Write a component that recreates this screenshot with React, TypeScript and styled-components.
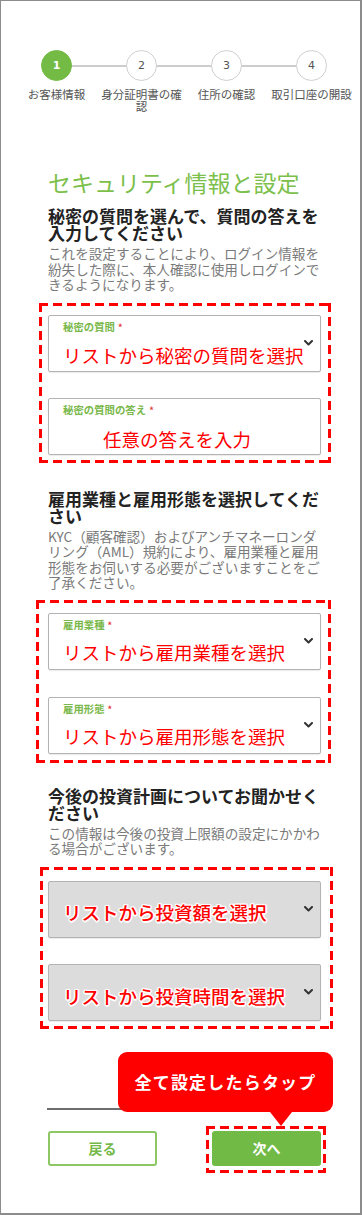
import React from "react";
import styled, { createGlobalStyle, css } from "styled-components";

const GlobalStyle = createGlobalStyle`
  html, body { margin: 0; padding: 0; background: #fff; }
  body { font-family: "Noto Sans CJK JP", "Noto Sans", sans-serif; }
`;

const GREEN = "#74bb46";
const RED = "#ff0000";

const dashedBorder = css`
  background-image: linear-gradient(to right, ${RED} 9px, transparent 9px),
    linear-gradient(to right, ${RED} 9px, transparent 9px),
    linear-gradient(to bottom, ${RED} 9px, transparent 9px),
    linear-gradient(to bottom, ${RED} 9px, transparent 9px);
  background-size: 14px 3px, 14px 3px, 3px 14px, 3px 14px;
  background-position: 0 0, 0 100%, 0 0, 100% 0;
  background-repeat: repeat-x, repeat-x, repeat-y, repeat-y;
`;

const Page = styled.div`
  width: 362px;
  height: 1215px;
  box-sizing: border-box;
  border: 1px solid #8c8c8c;
  border-right-width: 2px;
  border-bottom-width: 2px;
  background: #fff;
  overflow: hidden;
  padding-top: 49px;
`;

const Stepper = styled.div`
  display: grid;
  grid-template-columns: repeat(4, 85px);
  margin-left: 13px;
`;

const Step = styled.div<{ $first?: boolean }>`
  position: relative;
  display: flex;
  flex-direction: column;
  align-items: center;
  &::before {
    content: "";
    display: ${(p) => (p.$first ? "none" : "block")};
    position: absolute;
    top: 14.5px;
    left: -50%;
    right: 50%;
    height: 2px;
    background: #cccccc;
  }
`;

const StepCircle = styled.div<{ $active?: boolean }>`
  position: relative;
  z-index: 1;
  width: 31px;
  height: 31px;
  box-sizing: border-box;
  border-radius: 50%;
  border: 1px solid ${(p) => (p.$active ? GREEN : "#cfcfcf")};
  background: ${(p) => (p.$active ? GREEN : "#fff")};
  color: ${(p) => (p.$active ? "#fff" : "#555")};
  font-family: "DejaVu Sans", sans-serif;
  font-size: 11px;
  font-weight: ${(p) => (p.$active ? 700 : 400)};
  display: flex;
  align-items: center;
  justify-content: center;
`;

const StepLabel = styled.div`
  margin-top: 8px;
  width: 85px;
  font-size: 11.5px;
  line-height: 11.5px;
  color: #555;
  text-align: center;
`;

const Content = styled.div`
  padding: 0 39px 0 47px;
`;

const Title = styled.h1`
  margin: 57px 0 0;
  font-size: 23px;
  line-height: 26px;
  font-weight: 400;
  color: #7cc04b;
  white-space: nowrap;
`;

const Heading = styled.h2<{ $mt: number }>`
  margin: ${(p) => p.$mt}px 0 0;
  font-size: 17px;
  line-height: 17px;
  font-weight: 700;
  color: #222;
  white-space: nowrap;
`;

const Desc = styled.p`
  margin: 5px 0 0;
  font-size: 13.6px;
  line-height: 15.5px;
  color: #7a7a7a;
  white-space: nowrap;
`;

const DashedGroup = styled.div<{ $l: number; $r: number; $pt: number; $pb: number; $gap: number; $mt: number }>`
  margin: ${(p) => p.$mt}px -${(p) => p.$r}px 0 -${(p) => p.$l}px;
  padding: ${(p) => p.$pt + 3}px ${(p) => p.$r}px ${(p) => p.$pb + 3}px ${(p) => p.$l}px;
  ${dashedBorder}
  display: flex;
  flex-direction: column;
  gap: ${(p) => p.$gap}px;
`;

const Field = styled.div<{ $filled?: boolean }>`
  display: grid;
  grid-template-columns: 1fr auto;
  height: 57px;
  box-sizing: border-box;
  border: 1px solid #b3b3b3;
  border-radius: 2px;
  background: ${(p) => (p.$filled ? "#dcdcdc" : "#fff")};
  box-shadow: 0 1px 1px rgba(0, 0, 0, 0.08);
  padding: 5px 7px 0 14px;
`;

const FieldBody = styled.div`
  display: flex;
  flex-direction: column;
  min-width: 0;
`;

const FieldLabel = styled.div`
  font-size: 10.4px;
  line-height: 11px;
  font-weight: 700;
  color: #7ab84b;
  white-space: nowrap;
`;

const Required = styled.span`
  color: #e53935;
  margin-left: 3px;
  font-size: 9px;
`;

const FieldValue = styled.div<{ $mt: number; $indent?: number; $outlined?: boolean }>`
  margin-top: ${(p) => p.$mt}px;
  padding-left: ${(p) => p.$indent ?? 0}px;
  font-size: 18.5px;
  line-height: 24px;
  color: ${RED};
  white-space: nowrap;
  font-weight: ${(p) => (p.$outlined ? 500 : 400)};
  text-shadow: ${(p) =>
    p.$outlined
      ? "1.5px 0 0 #fff, -1.5px 0 0 #fff, 0 1.5px 0 #fff, 0 -1.5px 0 #fff, 1px 1px 0 #fff, -1px -1px 0 #fff, 1px -1px 0 #fff, -1px 1px 0 #fff, 0 0 3px #fff"
      : "none"};
`;

const Chevron = styled.svg`
  margin-top: 19px;
  width: 9px;
  height: 6px;
`;

const Footer = styled.div`
  position: relative;
  padding-top: 79px;
`;

const Underline = styled.div`
  height: 0;
  border-bottom: 2px solid #6e6e6e;
  margin-left: -1px;
`;

const ButtonRow = styled.div`
  margin-top: 21px;
  display: flex;
  justify-content: space-between;
  align-items: flex-start;
`;

const Button = styled.button<{ $primary?: boolean }>`
  width: 109px;
  height: 35px;
  box-sizing: border-box;
  border-radius: 3px;
  border: 2px solid ${(p) => (p.$primary ? "#70ba45" : "#8cc763")};
  background: ${(p) => (p.$primary ? "#70ba45" : "#fff")};
  color: ${(p) => (p.$primary ? "#fff" : "#74b94a")};
  font-family: "Noto Sans CJK JP", sans-serif;
  font-size: 14px;
  font-weight: 700;
  padding: 0;
  display: flex;
  align-items: center;
  justify-content: center;
`;

const DashedFrame = styled.div`
  margin: -5px -5px -7px -6px;
  padding: 5px 5px 7px 6px;
  ${dashedBorder}
  display: flex;
`;

const Callout = styled.div`
  position: absolute;
  left: 70px;
  top: 23px;
  width: 215px;
  height: 60px;
  border-radius: 9px;
  background: ${RED};
  color: #fff;
  font-size: 17px;
  font-weight: 700;
  letter-spacing: 1.2px;
  display: flex;
  align-items: center;
  justify-content: center;
  &::after {
    content: "";
    position: absolute;
    left: 152px;
    bottom: -14px;
    border-left: 11px solid transparent;
    border-right: 11px solid transparent;
    border-top: 14px solid ${RED};
  }
`;

const ChevronIcon = () => (
  <Chevron viewBox="0 0 9 6">
    <polyline points="1,1 4.5,4.5 8,1" fill="none" stroke="#333" strokeWidth="2" strokeLinecap="round" strokeLinejoin="round" />
  </Chevron>
);

type FieldProps = {
  label?: string;
  value: string;
  select?: boolean;
  filled?: boolean;
  indent?: number;
  valueTop: number;
};

const FormField = ({ label, value, select, filled, indent, valueTop }: FieldProps) => (
  <Field $filled={filled}>
    <FieldBody>
      {label && (
        <FieldLabel>
          {label}
          <Required>*</Required>
        </FieldLabel>
      )}
      <FieldValue $mt={valueTop} $indent={indent} $outlined={filled}>
        {value}
      </FieldValue>
    </FieldBody>
    {select ? <ChevronIcon /> : <span />}
  </Field>
);

const steps = ["お客様情報", "身分証明書の確認", "住所の確認", "取引口座の開設"];

export default function App() {
  return (
    <>
      <GlobalStyle />
      <Page>
        <Stepper>
          {steps.map((s, i) => (
            <Step key={s} $first={i === 0}>
              <StepCircle $active={i === 0}>{i + 1}</StepCircle>
              <StepLabel>{s}</StepLabel>
            </Step>
          ))}
        </Stepper>
        <Content>
          <Title>セキュリティ情報と設定</Title>

          <Heading $mt={12}>
            秘密の質問を選んで、質問の答えを
            <br />
            入力してください
          </Heading>
          <Desc>
            これを設定することにより、ログイン情報を
            <br />
            紛失した際に、本人確認に使用しログインで
            <br />
            きるようになります。
          </Desc>
          <DashedGroup $mt={10} $l={9} $r={10} $pt={9} $pb={5} $gap={26}>
            <FormField label="秘密の質問" value="リストから秘密の質問を選択" select valueTop={10} />
            <FormField label="秘密の質問の答え" value="任意の答えを入力" indent={40} valueTop={11} />
          </DashedGroup>

          <Heading $mt={27}>
            雇用業種と雇用形態を選択してくだ
            <br />
            さい
          </Heading>
          <Desc>
            KYC（顧客確認）およびアンチマネーロンダ
            <br />
            リング（AML）規約により、雇用業種と雇用
            <br />
            形態をお伺いする必要がございますことをご
            <br />
            了承ください。
          </Desc>
          <DashedGroup $mt={9} $l={12} $r={10} $pt={10} $pb={6} $gap={27}>
            <FormField label="雇用業種" value="リストから雇用業種を選択" select valueTop={9} />
            <FormField label="雇用形態" value="リストから雇用形態を選択" select valueTop={9} />
          </DashedGroup>

          <Heading $mt={24}>
            今後の投資計画についてお聞かせく
            <br />
            ださい
          </Heading>
          <Desc>
            この情報は今後の投資上限額の設定にかかわ
            <br />
            る場合がございます。
          </Desc>
          <DashedGroup $mt={10} $l={8} $r={12} $pt={11} $pb={5} $gap={26}>
            <FormField value="リストから投資額を選択" select filled indent={-2} valueTop={13} />
            <FormField value="リストから投資時間を選択" select filled indent={-2} valueTop={14} />
          </DashedGroup>

          <Footer>
            <Underline />
            <ButtonRow>
              <Button>戻る</Button>
              <DashedFrame>
                <Button $primary>次へ</Button>
              </DashedFrame>
            </ButtonRow>
            <Callout>全て設定したらタップ</Callout>
          </Footer>
        </Content>
      </Page>
    </>
  );
}
